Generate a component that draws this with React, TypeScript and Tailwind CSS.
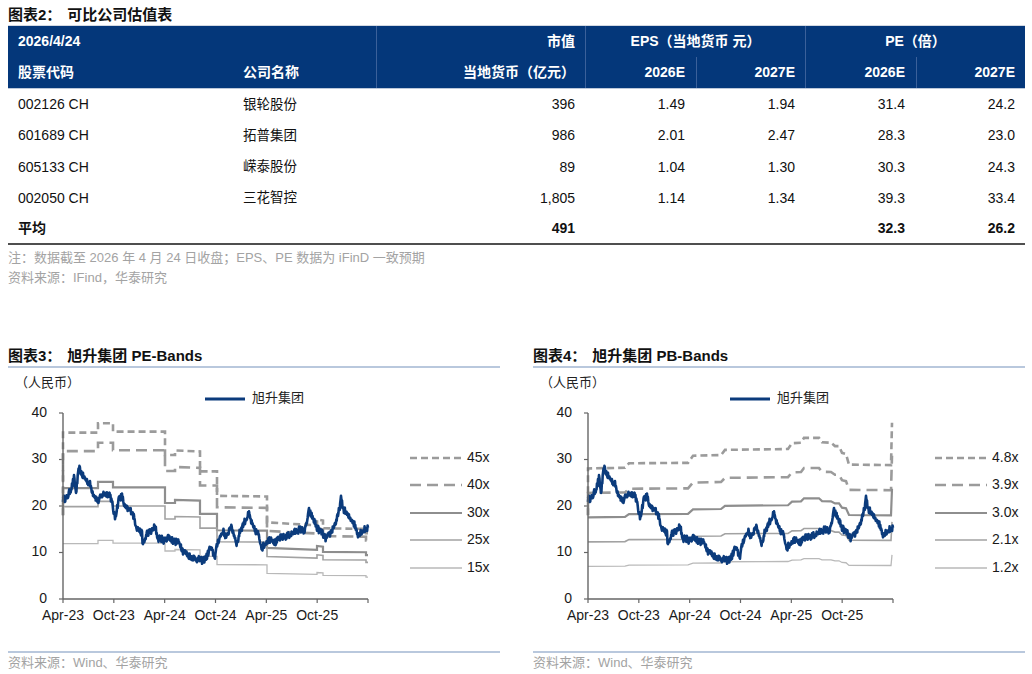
const FONT = "font-['Liberation_Sans','Noto_Sans_CJK_SC',sans-serif]"

// price key points: [page x of the PE chart, value]; local x = x - 8
const KEY: [number, number][] = [
  [63, 21.5], [67, 21.7], [72, 24.3], [74, 26], [76, 22.8], [79, 28.2], [83, 26.4], [90, 24.7], [93, 22.8],
  [98, 21], [103, 22.6], [110, 22.6], [115, 17.4], [119, 21.7], [122, 22.1], [125, 19.6], [132, 18.9],
  [137, 15.3], [142, 14], [143, 11.4], [147, 14.2], [152, 14.6], [155, 15.7], [158, 12.9], [160, 13.1],
  [165, 12.5], [168, 13.5], [173, 12.5], [180, 12.0], [183, 10.3], [190, 9.2], [197, 8.6], [203, 8.2],
  [207, 9.2], [210, 11], [215, 9.2], [218, 12.5], [223, 14.6], [227, 13.1], [230, 15.7], [233, 14.6],
  [237, 11.8], [240, 14.6], [245, 16.8], [249, 18.3], [253, 15.3], [258, 14], [262, 11], [267, 12.5],
  [272, 13.1], [275, 12], [280, 13.1], [287, 13.5], [293, 14.2], [300, 15], [305, 14.6], [309, 18.9],
  [313, 17.4], [317, 15.3], [322, 14.2], [326, 12.9], [330, 14], [335, 16.1], [338, 17.8], [341, 21.5],
  [343, 19.6], [348, 17.8], [353, 16.8], [358, 14], [362, 14.6], [365, 15], [368, 15.3],
]

const PE_BASE: [number, number][] = [
  [55, 0.795], [90, 0.795], [90, 0.84], [105, 0.84], [105, 0.8], [157, 0.8], [157, 0.688], [167, 0.688],
  [167, 0.71], [192, 0.705], [192, 0.61], [209, 0.61], [209, 0.493], [259, 0.49], [259, 0.366], [309, 0.352],
  [309, 0.38], [315, 0.375], [315, 0.338], [358, 0.335], [358, 0.315], [360, 0.315],
]

const PB_BASE: [number, number][] = [
  [55, 5.85], [92, 5.88], [96, 6.08], [155, 6.1], [160, 6.42], [188, 6.45], [192, 6.68], [255, 6.72],
  [259, 6.98], [268, 7.0], [271, 7.22], [286, 7.22], [289, 7.02], [298, 7.0], [302, 6.85], [306, 6.85],
  [309, 6.55], [313, 6.5], [316, 6.02], [358, 6.0], [359, 7.9],
]

const yv = (v: number) => 231 - v * 4.65

function buildPrice() {
  let seed = 12345
  const rnd = () => {
    seed = (seed * 16807) % 2147483647
    return seed / 2147483647
  }
  const pts: string[] = []
  for (let i = 0; i < KEY.length - 1; i++) {
    const [x0, v0] = KEY[i]
    const [x1, v1] = KEY[i + 1]
    const n = Math.max(1, Math.round((x1 - x0) / 0.45))
    for (let j = 0; j < n; j++) {
      const f = j / n
      const v = v0 + (v1 - v0) * f + (rnd() - 0.5) * 1.5
      pts.push(`${(x0 - 8 + (x1 - x0) * f).toFixed(2)},${yv(v).toFixed(2)}`)
    }
  }
  const last = KEY[KEY.length - 1]
  pts.push(`${last[0] - 8},${yv(last[1]).toFixed(2)}`)
  return 'M' + pts.join(' L')
}

const PRICE = buildPrice()

const STYLES = [
  { stroke: '#9b9b9b', width: 2.6, dash: '7 4' },
  { stroke: '#9b9b9b', width: 2.6, dash: '11 6' },
  { stroke: '#8e8e8e', width: 2.2, dash: undefined },
  { stroke: '#a2a2a2', width: 1.6, dash: undefined },
  { stroke: '#b9b9b9', width: 1.3, dash: undefined },
]

function bandPath(base: [number, number][], k: number, dashed: boolean) {
  const pts = base.map(([x, e]) => `${x},${yv(e * k).toFixed(2)}`)
  if (dashed) pts.unshift(`55,${yv(18).toFixed(2)}`)
  return 'M' + pts.join(' L')
}

function BandChart({ num, name, base, mults, labels }: { num: string; name: string; base: [number, number][]; mults: number[]; labels: string[] }) {
  const ticks = [0, 1, 2, 3, 4, 5, 6].map(i => 55 + i * (305 / 6))
  const months = ['Apr-23', 'Oct-23', 'Apr-24', 'Oct-24', 'Apr-25', 'Oct-25']
  const legendY = [90, 117, 145, 172, 200]

  return (
    <div className="flex flex-col">
      <div className="h-[22px] flex items-center border-b-2 border-[#b9c8dd] text-[15px] font-bold text-[#111] leading-[20px]">
        {num}<span className="ml-[6px]">{name}</span>
      </div>
      <svg width="492" height="283" viewBox="0 0 492 283" className="block">
        <text x="7" y="16" fontSize="13" fill="#222" dominantBaseline="middle">（人民币）</text>
        <line x1="197" y1="31" x2="237" y2="31" stroke="#0b3b7c" strokeWidth="3" />
        <text x="244" y="31" fontSize="13" fill="#222" dominantBaseline="middle">旭升集团</text>

        {[0, 10, 20, 30, 40].map(v => (
          <g key={v}>
            <line x1="51" y1={yv(v)} x2="55" y2={yv(v)} stroke="#666" strokeWidth="1.2" />
            <text x="39" y={yv(v)} fontSize="14" fill="#1a1a1a" textAnchor="end" dominantBaseline="middle">{v}</text>
          </g>
        ))}
        {ticks.map((x, i) => (
          <line key={i} x1={x} y1={yv(0)} x2={x} y2={yv(0) + 4} stroke="#666" strokeWidth="1.2" />
        ))}
        {months.map((m, i) => (
          <text key={m} x={ticks[i]} y="248" fontSize="14" fill="#1a1a1a" textAnchor="middle" dominantBaseline="middle">{m}</text>
        ))}

        {mults.map((k, i) => (
          <path
            key={i}
            d={bandPath(base, k, i < 2)}
            fill="none"
            stroke={STYLES[i].stroke}
            strokeWidth={STYLES[i].width}
            strokeDasharray={STYLES[i].dash}
          />
        ))}
        <path d={PRICE} fill="none" stroke="#0b3b7c" strokeWidth="2.6" strokeLinejoin="round" />

        <line x1="55" y1={yv(40)} x2="55" y2={yv(0)} stroke="#666" strokeWidth="1.4" />
        <line x1="55" y1={yv(0)} x2="360" y2={yv(0)} stroke="#666" strokeWidth="1.4" />

        {labels.map((l, i) => (
          <g key={l}>
            <line x1="402" y1={legendY[i]} x2="454" y2={legendY[i]} stroke={STYLES[i].stroke} strokeWidth={STYLES[i].width} strokeDasharray={STYLES[i].dash} />
            <text x="459" y={legendY[i]} fontSize="14" fill="#1a1a1a" dominantBaseline="middle">{l}</text>
          </g>
        ))}
      </svg>
      <div className="border-t-2 border-[#b9c8dd] text-[13px] leading-[20px] text-[#a3a3a3]">资料来源：Wind、华泰研究</div>
    </div>
  )
}

const GRID = "grid grid-cols-[225px_143px_209px_111px_109px_111px_109px]"
const PAD = ['pl-[10px]', 'pl-[10px]', 'pr-[10px]', 'pr-[11px]', 'pr-[10px]', 'pr-[11px]', 'pr-[10px]']

const rows = [
  ['002126 CH', '银轮股份', '396', '1.49', '1.94', '31.4', '24.2'],
  ['601689 CH', '拓普集团', '986', '2.01', '2.47', '28.3', '23.0'],
  ['605133 CH', '嵘泰股份', '89', '1.04', '1.30', '30.3', '24.3'],
  ['002050 CH', '三花智控', '1,805', '1.14', '1.34', '39.3', '33.4'],
]
const avg = ['平均', '', '491', '', '', '32.3', '26.2']

export default function App() {
  return (
    <div className={`w-[1032px] h-[674px] overflow-hidden bg-white text-[#111] ${FONT}`}>
      <div className="pt-[5px] pl-[8px] h-[25px] text-[15px] font-bold leading-[20px]">
        图表2：<span className="ml-[6px]">可比公司估值表</span>
      </div>

      <div className="ml-[8px] w-[1017px]">
        <div className="border-t border-[#d3d9e2] bg-[#04377a] text-white font-bold text-[14px]">
          <div className={`${GRID} h-[31px]`}>
            <div className="col-span-2 flex items-center pl-[10px]">2026/4/24</div>
            <div className="flex items-center justify-end pr-[10px] border-l border-[#3b609a]">市值</div>
            <div className="col-span-2 flex items-center justify-center border-l border-[#3b609a]">EPS（当地货币 元）</div>
            <div className="col-span-2 flex items-center justify-center border-l border-[#3b609a]">PE（倍）</div>
          </div>
          <div className={`${GRID} h-[31px]`}>
            <div className="flex items-center pl-[10px]">股票代码</div>
            <div className="flex items-center pl-[10px]">公司名称</div>
            <div className="flex items-center justify-end pr-[10px] border-l border-[#3b609a]">当地货币（亿元）</div>
            <div className="flex items-center justify-end pr-[11px] border-l border-[#3b609a]">2026E</div>
            <div className="flex items-center justify-end pr-[10px] border-l border-[#3b609a]">2027E</div>
            <div className="flex items-center justify-end pr-[11px] border-l border-[#3b609a]">2026E</div>
            <div className="flex items-center justify-end pr-[10px] border-l border-[#3b609a]">2027E</div>
          </div>
        </div>
        <div className="h-px bg-[#bcc8da]" />

        {rows.map(r => (
          <div key={r[0]} className={`${GRID} h-[31.25px] text-[14px]`}>
            {r.map((c, i) => (
              <div key={i} className={`flex items-center ${i > 1 ? 'justify-end' : ''} ${PAD[i]} ${i === 1 ? 'text-[13.5px]' : ''}`}>
                {c}
              </div>
            ))}
          </div>
        ))}
        <div className={`${GRID} h-[31.25px] text-[14px] font-bold border-b-2 border-[#4f4f4f]`}>
          {avg.map((c, i) => (
            <div key={i} className={`flex items-center ${i > 1 ? 'justify-end' : ''} ${PAD[i]}`}>
              {c}
            </div>
          ))}
        </div>
      </div>

      <div className="mt-[3px] pl-[8px] text-[13px] leading-[20px] text-[#a3a3a3]">
        <div>注：数据截至 2026 年 4 月 24 日收盘；EPS、PE 数据为 iFinD 一致预期</div>
        <div>资料来源：IFind，华泰研究</div>
      </div>

      <div className="mt-[58px] pl-[8px] grid grid-cols-[492px_492px] gap-x-[33px]">
        <BandChart num="图表3：" name="旭升集团 PE-Bands" base={PE_BASE} mults={[45, 40, 30, 25, 15]} labels={['45x', '40x', '30x', '25x', '15x']} />
        <BandChart num="图表4：" name="旭升集团 PB-Bands" base={PB_BASE} mults={[4.8, 3.9, 3.0, 2.1, 1.2]} labels={['4.8x', '3.9x', '3.0x', '2.1x', '1.2x']} />
      </div>
    </div>
  )
}
